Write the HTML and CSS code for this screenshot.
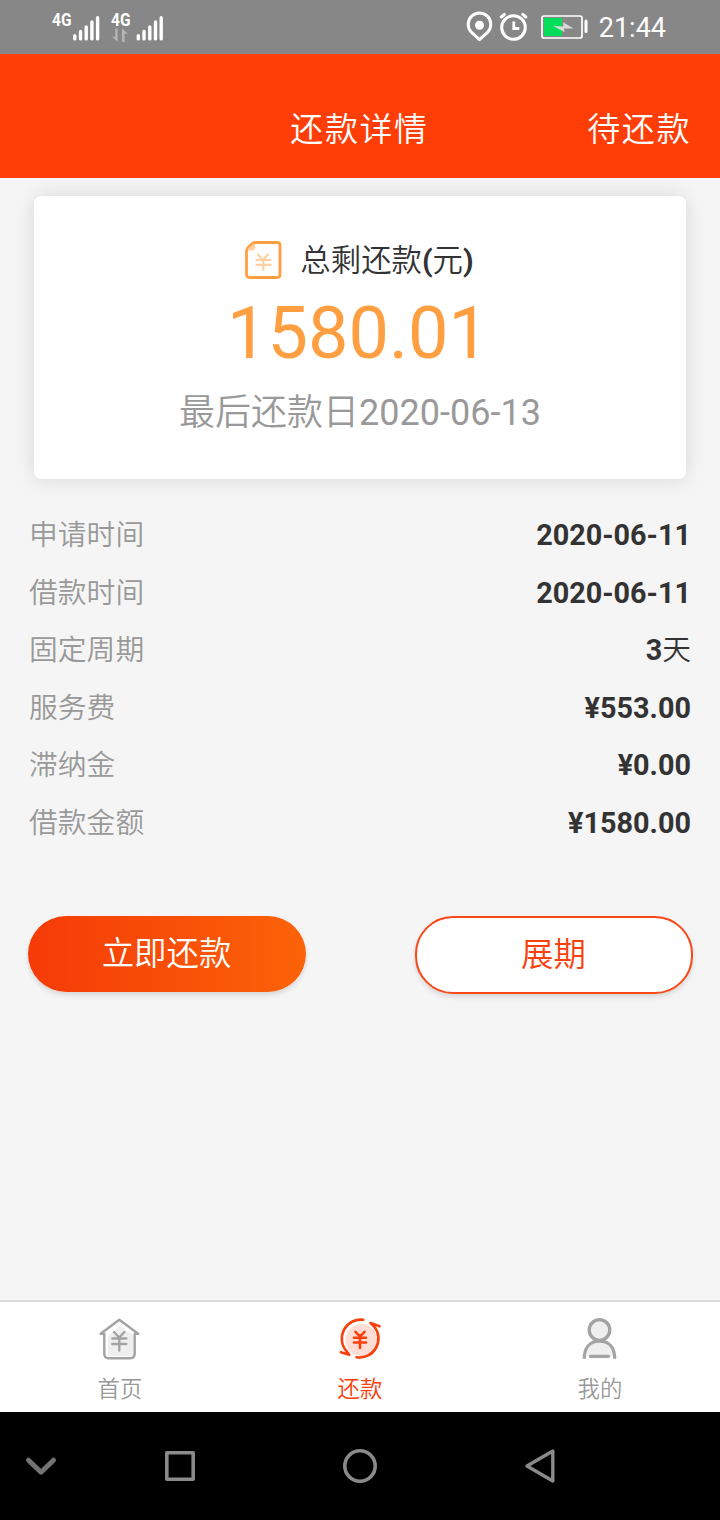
FILE: index.html
```html
<!DOCTYPE html>
<html lang="zh-CN">
<head>
<meta charset="utf-8">
<title>还款详情</title>
<link rel="stylesheet" href="styles.css">
</head>
<body>
<div class="statusbar">
  <div class="signals">
    <div class="sim">
      <span class="net">4G</span>
      <svg class="bars" width="30" height="28" viewBox="0 0 30 28" stroke="#fff" stroke-width="3.4" stroke-linecap="round"><path d="M1.800 22.600v3.300M7.500 18.500v7.400M13.200 14v11.900M18.900 9v16.900M24.600 4.800v21.100"/></svg>
    </div>
    <div class="sim second">
      <div class="netcol">
        <span class="net">4G</span>
        <svg class="arrows" width="18" height="15" viewBox="0 0 18 15" fill="#b4b4b4"><path d="M4.200 0.500h2.400v13.500L1 8.800h3.200zM11 14V0.500l6 5.300h-3.400V14z"/></svg>
      </div>
      <svg class="bars" width="30" height="28" viewBox="0 0 30 28" stroke="#fff" stroke-width="3.4" stroke-linecap="round"><path d="M2.300 22.600v3.300M8 18.500v7.400M13.800 14v11.900M19.500 9v16.900M25.200 4.800v21.100"/></svg>
    </div>
  </div>
  <div class="indicators">
    <svg width="122" height="32" viewBox="466 11 122 32" fill="none">
      <path d="M479.500 39.700l-8.500-7.900a11.300 11.300 0 1 1 17 0z" stroke="#fff" stroke-width="3" stroke-linejoin="round"/>
      <circle cx="479.500" cy="25.300" r="4.500" fill="#fff"/>
      <circle cx="513.500" cy="27.500" r="11.800" stroke="#fff" stroke-width="3"/>
      <path d="M513.800 21.500v7h5.500" stroke="#fff" stroke-width="2.800"/>
      <path d="M501.300 17l3-2.600M522.800 14.400l3 2.600" stroke="#fff" stroke-width="3" stroke-linecap="round"/>
      <rect x="542" y="16" width="40" height="22" rx="2" stroke="#fff" stroke-width="1.700"/>
      <path d="M544 18h18v18h-18z" fill="#04dc5c"/>
      <path d="M553 26l10.500 0.600-0.500-4.400 10.500 6.300h-9.500l0.500 3.500z" fill="#d8dcd9"/>
      <path d="M586 21v10.500" stroke="#fff" stroke-width="3" stroke-linecap="round"/>
    </svg>
    <span class="clock">21:44</span>
  </div>
</div>

<header class="header">
  <span class="side"></span>
  <h1 class="title">还款详情</h1>
  <span class="side state">待还款</span>
</header>

<main class="content">
  <section class="card">
    <div class="card-title">
      <svg width="38" height="40" viewBox="0 0 38 40" fill="none">
        <path d="M11 2.500h22q3 0 3 3v29q0 3-3 3H5.500q-3 0-3-3V11q0-2 1.400-3.300l4-3.900Q9.300 2.500 11 2.500z" stroke="#ff9f41" stroke-width="2.800"/>
        <path d="M4 10.500V8.700L9.700 4h1.500v3.500q0 3-3 3z" fill="#ffcfa0"/>
        <path d="M14 14.500l5 5.500 5-5.500M12.500 20h14M12.500 24.800h14M19.300 20v10" stroke="#ffd0a3" stroke-width="2.200" stroke-linecap="round"/>
      </svg>
      <span class="card-label">总剩还款<b>(</b>元<b>)</b></span>
    </div>
    <div class="amount">1580.01</div>
    <div class="due">最后还款日2020-06-13</div>
  </section>

  <dl class="details">
    <div class="row"><dt>申请时间</dt><dd>2020-06-11</dd></div>
    <div class="row"><dt>借款时间</dt><dd>2020-06-11</dd></div>
    <div class="row"><dt>固定周期</dt><dd>3<span class="unit">天</span></dd></div>
    <div class="row"><dt>服务费</dt><dd>¥553.00</dd></div>
    <div class="row"><dt>滞纳金</dt><dd>¥0.00</dd></div>
    <div class="row"><dt>借款金额</dt><dd>¥1580.00</dd></div>
  </dl>

  <div class="actions">
    <button class="btn primary">立即还款</button>
    <button class="btn outline">展期</button>
  </div>
</main>

<nav class="tabs">
  <a class="tab">
    <svg width="44" height="44" viewBox="0 0 44 44" fill="none" stroke="#a3a3a3" stroke-width="2.400" stroke-linecap="round" stroke-linejoin="round">
      <path d="M10 19L22 9l15 10v20H10z" fill="#efefef" stroke="none"/>
      <path d="M6.300 16.800H2.600L21.300 2.800l18.900 14h-3.500v20q0 4.400-4.400 4.400H10.700q-4.400 0-4.400-4.400z"/>
      <path d="M16 15l5.200 5.500 5.200-5.500M14.300 21.500h14M14.300 27h14M21.300 20.500v13"/>
    </svg>
    <span>首页</span>
  </a>
  <a class="tab active">
    <svg width="44" height="44" viewBox="0 0 44 44" fill="none" stroke="#f9400d" stroke-width="2.600" stroke-linecap="round" stroke-linejoin="round">
      <circle cx="23.500" cy="23" r="16" fill="#ffdcd4" stroke="none"/>
      <path d="M25.300 2.800A19 19 0 0 0 8.800 34.500l2.500 3.200-8.500-2.500M18.500 40.300A19 19 0 0 0 36.200 9.500L32.500 6l9 3.200"/>
      <path d="M17.500 14.800l4.500 4.600 4.500-4.600M16 20.700h12M16 25.500h12M22 20v11" stroke-width="2.600"/>
    </svg>
    <span>还款</span>
  </a>
  <a class="tab">
    <svg width="44" height="44" viewBox="0 0 44 44" fill="none" stroke="#a3a3a3" stroke-width="3.300" stroke-linecap="round">
      <path d="M9 39c0-9 5-14 13-14s14 5 14 14z" fill="#efefef" stroke="none"/>
      <circle cx="21.500" cy="13" r="10.300" fill="#efefef"/>
      <path d="M6.300 41.800C6.300 30.500 12 24.200 21.500 24.200S36.700 30.500 36.700 41.800" stroke-linecap="butt"/>
      <path d="M12.500 39.300h18"/>
    </svg>
    <span>我的</span>
  </a>
</nav>

<div class="navbar">
  <svg width="720" height="108" viewBox="0 0 720 108" fill="none" stroke="#8a8a8a" stroke-width="3.600" stroke-linejoin="round">
    <path d="M28.500 48.200l12.500 12 12.500-12" stroke="#737373" stroke-width="5" stroke-linecap="round"/>
    <rect x="166.800" y="40.800" width="26.400" height="26.400"/>
    <circle cx="360" cy="54" r="15.200"/>
    <path d="M552.800 39v30L527 54z" stroke-width="3.400"/>
  </svg>
</div>
</body>
</html>
```

FILE: styles.css
```css
* { box-sizing: border-box; }

body {
  margin: 0;
  width: 720px;
  height: 1520px;
  display: flex;
  flex-direction: column;
  overflow: hidden;
  background: #f5f5f5;
  color: #333;
  font-family: Roboto, "Noto Sans CJK SC DemiLight", "Noto Sans CJK SC Light", "Noto Sans CJK SC", sans-serif;
}

svg { display: block; flex: none; }

.statusbar {
  height: 54px;
  flex: none;
  display: flex;
  justify-content: space-between;
  background: #878787;
  color: #fff;
}

.signals { display: flex; padding: 11px 0 0 52px; }
.sim { display: flex; width: 49px; }
.second { margin-left: 10px; width: 55px; }
.net {
  display: block;
  width: 21px;
  font-size: 18.500px;
  line-height: 18px;
  font-weight: 700;
  transform: scaleX(0.84);
  transform-origin: left;
}
.netcol { width: 25px; }
.arrows { margin-top: -1px; }
.bars { margin-top: 2px; }

.indicators { display: flex; padding: 11px 54px 0 0; }
.clock { margin-left: 11px; font-size: 27px; line-height: 34px; }

.header {
  height: 124px;
  flex: none;
  display: flex;
  justify-content: space-between;
  padding: 52px 29px 0 28px;
  background: #ff3d07;
  color: #fff;
  font-size: 33px;
  line-height: 48px;
  letter-spacing: 1.6px;
}
.title { margin: 0; font-size: inherit; font-weight: 400; }
.side { width: 105px; white-space: nowrap; }
.state { text-align: right; }

.content { flex: 1; padding: 18px 29px 0; }

.card {
  height: 283px;
  margin: 0 5px;
  padding-top: 41px;
  border-radius: 7px;
  background: #fff;
  box-shadow: 0 0 20px rgba(0, 0, 0, 0.12);
  text-align: center;
}
.card-title {
  display: flex;
  justify-content: center;
  align-items: center;
  gap: 18px;
  height: 46px;
  padding-right: 2px;
  font-size: 30.400px;
}
.card-label { padding-bottom: 5px; }
.card-title b { font-weight: 700; }
.amount { height: 100px; padding-right: 4px; line-height: 102px; font-size: 72px; color: #ff9f41; }
.due { line-height: 61px; font-size: 36px; color: #999; }

.details { margin: 28px 0 0; }
.row {
  display: flex;
  justify-content: space-between;
  height: 57.600px;
  line-height: 57.600px;
  font-size: 28.800px;
}
.row dt { color: #999; }
.row dd { margin: 0; font-weight: 700; }
.unit { font-weight: 400; }

.actions { display: flex; justify-content: space-between; margin: 63.400px -1.500px 0; }
.btn {
  width: 278px;
  height: 76px;
  padding: 0 0 6px;
  border: 0;
  border-radius: 38px;
  font: inherit;
  font-size: 32.400px;
  box-shadow: 0 3px 5px rgba(0, 0, 0, 0.12);
}
.primary { color: #fff; background: linear-gradient(90deg, #f53a07, #fb6308); }
.outline { height: 78px; color: #f9400d; background: #fff; border: 2px solid #f9481a; }

.tabs {
  height: 112px;
  flex: none;
  display: flex;
  background: #fff;
  border-top: 2px solid #dcdcdc;
}
.tab {
  flex: 1;
  display: flex;
  flex-direction: column;
  align-items: center;
  padding-top: 15px;
  color: #999;
  font-size: 22.400px;
  line-height: 32px;
}
.tab span { margin-top: 12px; }
.active { color: #f9400d; }

.navbar { height: 108px; flex: none; background: #000; }
```
